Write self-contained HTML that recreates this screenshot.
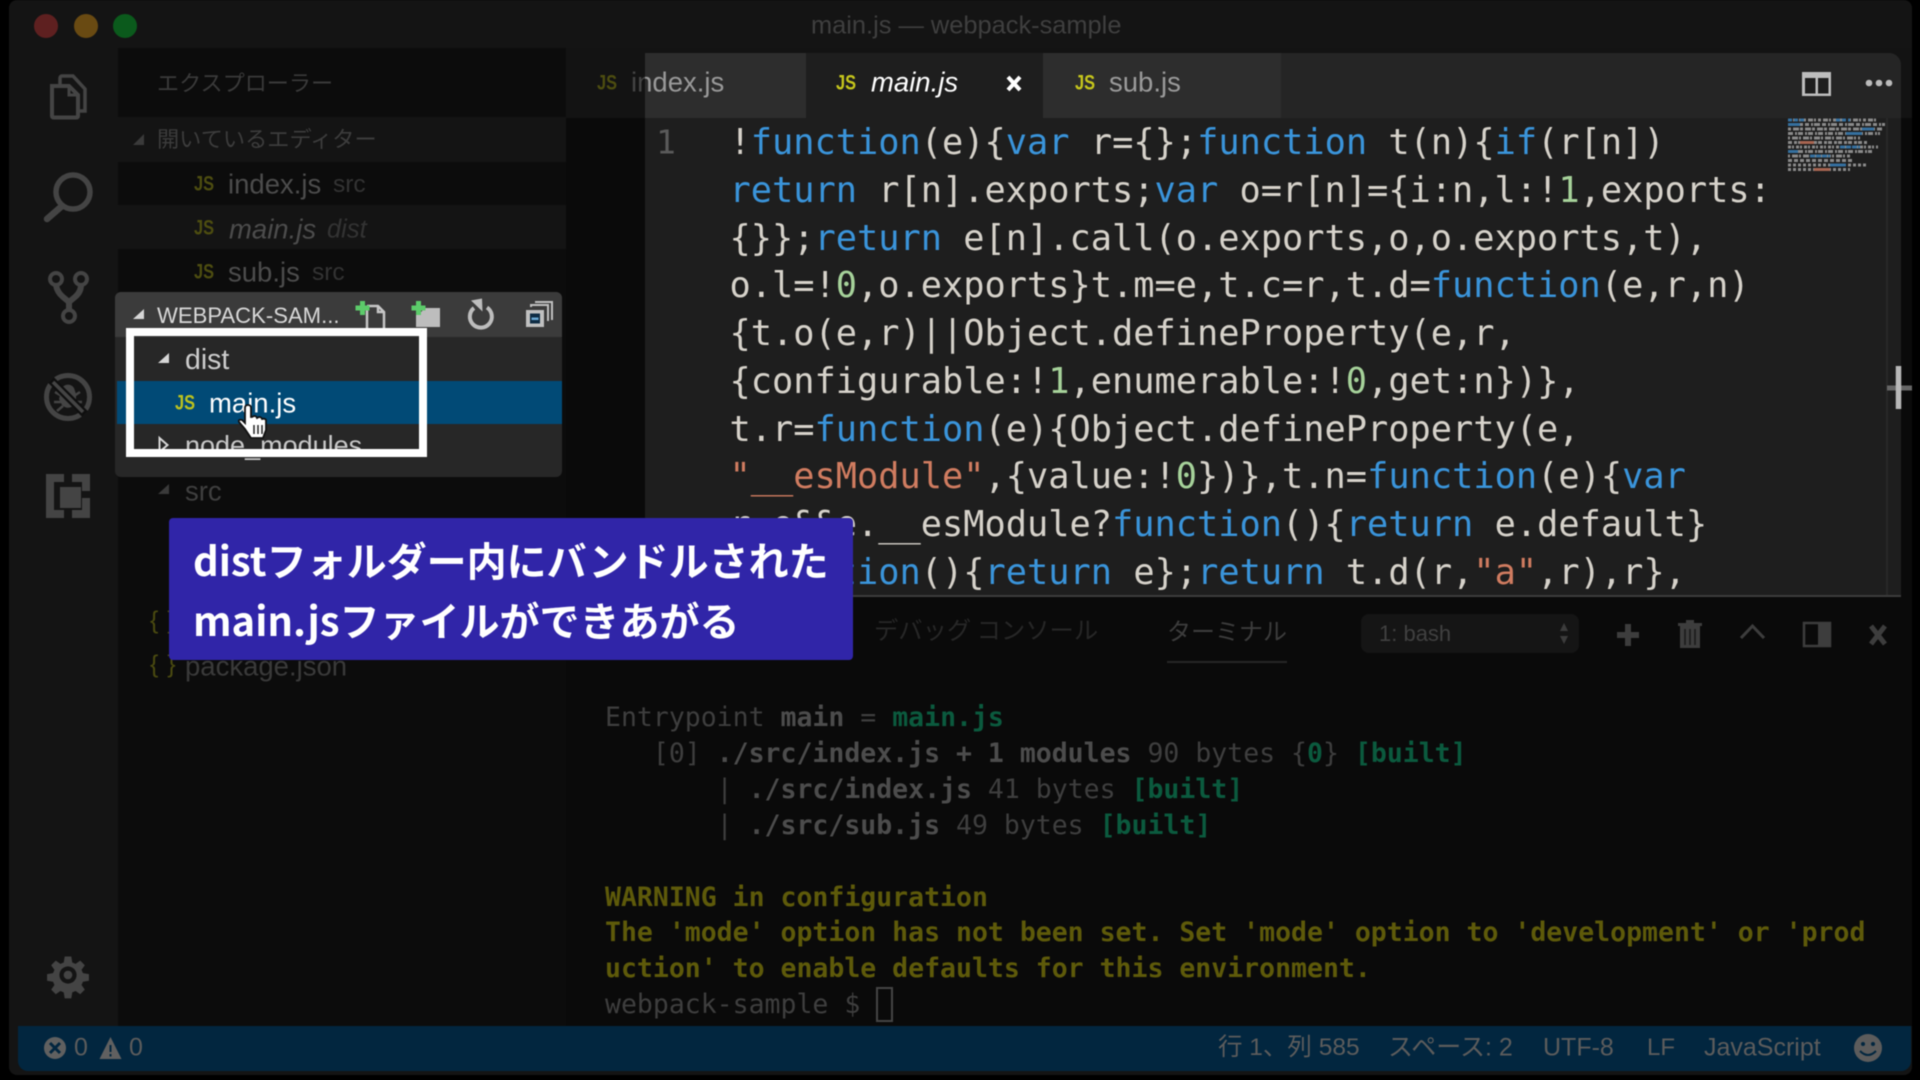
<!DOCTYPE html>
<html lang="ja"><head><meta charset="utf-8"><title>main.js — webpack-sample</title>
<style>
html,body{margin:0;padding:0;background:#000;width:1920px;height:1080px;overflow:hidden}
#r{position:absolute;left:0;top:0;width:1920px;height:1080px;overflow:hidden;font-family:"Liberation Sans","Noto Sans CJK JP",sans-serif;filter:blur(.45px)}
.b{position:absolute}
.t{position:absolute;white-space:pre;line-height:1;transform:translateY(-50%)}
.s{font-size:27.500px}
.cj{font-family:"Noto Sans CJK JP",sans-serif}
.js{position:absolute;white-space:pre;line-height:1;font-weight:700;font-size:21px;transform:translateY(-50%) scaleX(.78);transform-origin:left center}
.m{font-family:"DejaVu Sans Mono","Liberation Mono",monospace}
#code{position:absolute;left:729.500px;top:119px;font-size:35.300px;line-height:47.75px;color:#d6d2ca;white-space:pre;margin:0;font-family:"DejaVu Sans Mono",monospace}
#code i{font-style:normal;color:#3a94da}#code u{text-decoration:none;color:#a6d29a}#code b{font-weight:400;color:#d07c60}
#term{position:absolute;left:605px;top:700px;font-size:26.5px;line-height:35.9px;color:#3e3e3e;white-space:pre;margin:0;font-family:"DejaVu Sans Mono",monospace}
#term b{color:#4c4c4c}#term .g{color:#0b5a3e;font-weight:700}#term .y{color:#5e5a0a;font-weight:700}
svg{position:absolute;left:0;top:0}
</style></head><body><div id="r">
<!-- window -->
<div class="b" style="left:9px;top:0;width:1903px;height:1075px;background:#141414;border-radius:8px"></div>
<div class="b" style="left:118px;top:48px;width:448px;height:978px;background:#0c0c0c"></div>
<div class="b" style="left:566px;top:48px;width:1346px;height:70px;background:#131313"></div>
<div class="b" style="left:566px;top:118px;width:1346px;height:908px;background:#0a0a0a"></div>
<div class="b" style="left:118px;top:117px;width:448px;height:45px;background:#141414"></div>
<div class="b" style="left:118px;top:205px;width:448px;height:44px;background:#141414"></div>
<!-- traffic -->
<div class="b" style="left:34px;top:14px;width:24px;height:24px;border-radius:50%;background:#5e2020"></div>
<div class="b" style="left:74px;top:14px;width:24px;height:24px;border-radius:50%;background:#694a12"></div>
<div class="b" style="left:113px;top:14px;width:24px;height:24px;border-radius:50%;background:#0b5a1c"></div>
<div class="t" style="left:811px;top:26px;font-size:25.400px;color:#3f3f3f">main.js — webpack-sample</div>
<!-- activity icons -->
<svg width="1920" height="1080" fill="none" stroke="#444">
<path d="M52 86h17l9 9v21a1.5 1.5 0 0 1-1.500 1.500h-23a1.500 1.500 0 0 1-1.500-1.500z" stroke-width="4"/>
<path d="M69 86v9h9" stroke-width="3"/>
<path d="M60 84v-6a2 2 0 0 1 2-2h11l12 13v22h-5" stroke-width="3.500"/>
<circle cx="73" cy="192" r="17" stroke-width="5.500"/><path d="M62 206L47 219" stroke-width="6.500" stroke-linecap="round"/>
<circle cx="56" cy="279" r="6" stroke-width="4"/><circle cx="81" cy="279" r="6" stroke-width="4"/><circle cx="69" cy="316" r="6" stroke-width="4"/>
<path d="M56 285q1 7 7 12l6 5 6-5q6-5 6-12M69 302v8" stroke-width="6"/>
<circle cx="68" cy="397" r="21.500" stroke-width="5"/>
<path d="M62 388a7 7 0 0 1 12 0l2 6v6a8 8 0 0 1-14 5l-3-6z" fill="#444" stroke="none"/>
<path d="M55 392l7 4M54 402h7M57 411l6-5M80 392l-6 4M82 402h-7M79 411l-6-5" stroke-width="2.500"/>
<path d="M51 380l34 34" stroke="#0f0f0f" stroke-width="8"/>
<path d="M53 382l30 30" stroke-width="3.500"/>
<path d="M46 474h18v8h-10v28h10v8h-18zM72 474h18v17h-8v-9h-10zM72 510h10v-12h8v20h-18z" fill="#444" stroke="none"/>
<rect x="60" y="487" width="21" height="21" fill="#444" stroke="none"/>
<g transform="translate(68 975) scale(.66)" fill="#444" stroke="none">
<path fill-rule="evenodd" d="M-5-28h10l1.500 9 5 2.200 7-5 7 7-5 7 2.200 5 9 1.500v10l-9 1.500-2.200 5 5 7-7 7-7-5-5 2.200-1.500 9h-10l-1.500-9-5-2.200-7 5-7-7 5-7-2.200-5-9-1.500v-10l9-1.500 2.200-5-5-7 7-7 7 5 5-2.200zM0-13a13 13 0 1 0 .01 0zM0-6.500a6.500 6.500 0 1 1-.01 0z"/>
</g>
</svg>
<!-- sidebar text -->
<div class="t cj" style="left:157px;top:81.500px;font-size:22.100px;color:#3a3a3a">エクスプローラー</div>
<svg width="1920" height="1080"><polygon points="144,134 144,145 133,145" fill="#3a3a3a"/></svg>
<div class="t cj" style="left:157px;top:138px;font-size:22.200px;color:#3c3c3c">開いているエディター</div>
<div class="js" style="left:194px;top:184px;color:#4d4d10">JS</div>
<div class="t s" style="left:228px;top:184px;color:#4c4c4c">index.js</div>
<div class="t" style="left:333px;top:185px;font-size:24.500px;color:#333">src</div>
<div class="js" style="left:194px;top:228px;color:#4d4d10">JS</div>
<div class="t s" style="left:229px;top:228.500px;color:#4c4c4c;font-style:italic">main.js</div>
<div class="t" style="left:327px;top:229.500px;font-size:25.500px;color:#333;font-style:italic">dist</div>
<div class="js" style="left:194px;top:272px;color:#4d4d10">JS</div>
<div class="t s" style="left:228px;top:272px;color:#4c4c4c">sub.js</div>
<div class="t" style="left:312px;top:273px;font-size:24.500px;color:#333">src</div>
<svg width="1920" height="1080"><polygon points="169,484 169,494 158,494" fill="#3a3a3a"/></svg>
<div class="t s" style="left:185px;top:491px;color:#3f3f3f">src</div>
<div class="t" style="left:150px;top:621px;font-size:25px;color:#4a4a10;letter-spacing:1px">{ }</div>
<div class="t" style="left:150px;top:665px;font-size:25px;color:#4a4a10;letter-spacing:1px">{ }</div>
<div class="t s" style="left:185px;top:666px;color:#3a3a3a">package.json</div>
<!-- popup -->
<div class="b" style="left:115px;top:292px;width:447px;height:185px;background:#272727;border-radius:6px;overflow:hidden">
<div class="b" style="left:0;top:0;width:447px;height:45px;background:#3b3b3b"></div>
<div class="b" style="left:2px;top:89px;width:445px;height:43px;background:#014a76"></div>
</div>
<svg width="1920" height="1080"><polygon points="144,309 144,319 133,319" fill="#d6d6d6"/>
<polygon points="169,353 169,363 158,363" fill="#d6d6d6"/>
<polygon points="159.500,438 167.500,445 159.500,452" fill="none" stroke="#d6d6d6" stroke-width="2"/></svg>
<div class="t" style="left:157px;top:316px;font-size:22.100px;color:#d8d8d8">WEBPACK-SAM...</div>
<div class="t" style="left:185px;top:360px;font-size:28.500px;color:#cdcdcd">dist</div>
<div class="js" style="left:175px;top:403px;color:#bcc21e">JS</div>
<div class="t s" style="left:209px;top:402.500px;color:#fff">main.js</div>
<div class="t" style="left:185px;top:446px;font-size:27px;color:#c8c8c8">node_modules</div>
<!-- popup toolbar icons -->
<svg width="1920" height="1080" fill="none">
<path d="M367 306h11l6 6v16M367 306v22M384 312h-6v-6" stroke="#c6c6c6" stroke-width="2.500"/>
<path d="M360 301h5v4.500h4.500v5h-4.500v4.500h-5v-4.500h-4.500v-5h4.500z" fill="#5ccb6a"/>
<path d="M416 313h4l5-5h15v19h-24z" fill="#bdbdbd"/>
<path d="M416 301h5v4.500h4.500v5h-4.500v4.500h-5v-4.500h-4.500v-5h4.500z" fill="#5ccb6a"/>
<path d="M487 307.500a11 11 0 1 1-13 .5" stroke="#bdbdbd" stroke-width="4"/>
<path d="M473 301l11-2 .5 13z" fill="#bdbdbd" transform="translate(-2 -.5)"/>
<rect x="526" y="310" width="18" height="17" fill="#c0c0c0"/><rect x="530" y="313.500" width="10" height="10" fill="#0e2c44"/><rect x="531.500" y="317.500" width="7" height="2.500" fill="#6aa8d4"/>
<path d="M531 307v-2h17v16M536 303v-1h16v18" stroke="#c0c0c0" stroke-width="2"/>
</svg>
<!-- white highlight -->
<div class="b" style="left:126px;top:328px;width:285px;height:113px;border:8px solid #fff"></div>
<!-- hand -->
<svg width="1920" height="1080"><path d="M245 408q0-3 3-3 3 0 3 3v9l1 0q3-2 4.500 0l.5 1q3-2 4.500 0l.5 1q3-1 4 1v10l-3 8h-12l-6-9-6-7q-1-3 3-2l3 3z" fill="#fff" stroke="#111" stroke-width="1.800"/><path d="M254 425v9M258 425v9M262 425v9" stroke="#222" stroke-width="1.500"/></svg>
<!-- dim tab text -->
<div class="js" style="left:597px;top:82.500px;color:#4d4d10">JS</div>
<div class="t s" style="left:631px;top:82px;color:#444">index.js</div>
<!-- editor -->
<div class="b" style="left:0;top:0;width:1920px;height:1080px;clip-path:inset(53px 19px 483px 645px round 0 12px 0 0)">
<div class="b" style="left:645px;top:53px;width:1256px;height:544px;background:#1e1e1e"></div>
<div class="b" style="left:645px;top:53px;width:1256px;height:65px;background:#252525"></div>
<div class="b" style="left:645px;top:53px;width:161px;height:65px;background:#2d2d2d"></div>
<div class="b" style="left:806px;top:53px;width:237px;height:65px;background:#1e1e1e"></div>
<div class="b" style="left:1043px;top:53px;width:238px;height:65px;background:#2d2d2d"></div>
<div class="b" style="left:645px;top:595px;width:1256px;height:2px;background:#3c3c3c"></div>
<div class="t s" style="left:631px;top:82px;color:#999">index.js</div>
<div class="js" style="left:836px;top:82.500px;color:#c6c61c">JS</div>
<div class="t s" style="left:871px;top:82px;color:#fff;font-style:italic">main.js</div>
<div class="js" style="left:1075px;top:82.500px;color:#c6c61c">JS</div>
<div class="t s" style="left:1109px;top:82px;color:#9a9a9a">sub.js</div>
<svg width="1920" height="1080"><path d="M1008 77l12 13M1020 77l-12 13" stroke="#fff" stroke-width="4"/>
<path d="M1802 72h29v24h-29z" fill="#bdbdbd"/><rect x="1805" y="78" width="10.500" height="15.500" fill="#1e1e1e"/><rect x="1818" y="78" width="10.500" height="15.500" fill="#1e1e1e"/>
<circle cx="1869" cy="83" r="3.300" fill="#bbb"/><circle cx="1879" cy="83" r="3.300" fill="#bbb"/><circle cx="1889" cy="83" r="3.300" fill="#bbb"/>
<g fill="none" stroke-width="3">
<path d="M1788 120h88" stroke="#8a8a8a" stroke-dasharray="3 2 5 1 2 2"/><path d="M1788 120h18" stroke="#35709f" stroke-dasharray="4 2"/><path d="M1836 120h14" stroke="#35709f" stroke-dasharray="4 2"/>
<path d="M1788 124.500h97" stroke="#8a8a8a" stroke-dasharray="4 2 2 1 6 2"/><path d="M1788 124.500h12" stroke="#35709f"/>
<path d="M1788 129h94" stroke="#8a8a8a" stroke-dasharray="3 2 6 1"/><path d="M1862 129h12" stroke="#35709f"/>
<path d="M1788 133.500h92" stroke="#8a8a8a" stroke-dasharray="5 2 2 1"/><path d="M1846 133.500h16" stroke="#35709f"/>
<path d="M1788 138h72" stroke="#8a8a8a" stroke-dasharray="2 2 6 1"/>
<path d="M1788 142.500h80" stroke="#8a8a8a" stroke-dasharray="4 2 3 1"/><path d="M1800 142.500h14" stroke="#a86450"/>
<path d="M1788 147h90" stroke="#8a8a8a" stroke-dasharray="3 1 2 2"/><path d="M1840 147h20" stroke="#35709f" stroke-dasharray="5 1"/>
<path d="M1788 151.500h84" stroke="#8a8a8a" stroke-dasharray="5 2 2 1"/><path d="M1788 151.500h10" stroke="#35709f"/>
<path d="M1788 156h62" stroke="#8a8a8a" stroke-dasharray="2 2 6 1"/><path d="M1810 156h20" stroke="#35709f" stroke-dasharray="5 1"/>
<path d="M1788 160.500h66" stroke="#8a8a8a" stroke-dasharray="4 2"/>
<path d="M1788 165h78" stroke="#8a8a8a" stroke-dasharray="3 2"/><path d="M1830 165h16" stroke="#35709f"/>
<path d="M1788 169.500h62" stroke="#8a8a8a" stroke-dasharray="3 2"/><path d="M1814 169.500h16" stroke="#a86450"/>
</g>
<path d="M1887 118v477" stroke="#2c2c2c" stroke-width="1.500"/>
</svg>
<div class="t m" style="left:656px;top:142px;font-size:33px;color:#5a5a5a">1</div>
<pre id="code">!<i>function</i>(e){<i>var</i> r={};<i>function</i> t(n){<i>if</i>(r[n])
<i>return</i> r[n].exports;<i>var</i> o=r[n]={i:n,l:!<u>1</u>,exports:
{}};<i>return</i> e[n].call(o.exports,o,o.exports,t),
o.l=!<u>0</u>,o.exports}t.m=e,t.c=r,t.d=<i>function</i>(e,r,n)
{t.o(e,r)||Object.defineProperty(e,r,
{configurable:!<u>1</u>,enumerable:!<u>0</u>,get:n})},
t.r=<i>function</i>(e){Object.defineProperty(e,
<b>"__esModule"</b>,{value:!<u>0</u>})},t.n=<i>function</i>(e){<i>var</i>
r=e&amp;&amp;e.__esModule?<i>function</i>(){<i>return</i> e.default}
:<i>function</i>(){<i>return</i> e};<i>return</i> t.d(r,<b>"a"</b>,r),r},</pre>
</div>
<!-- resize cursor -->
<svg width="1920" height="1080"><path d="M1887 388h25" stroke="#666" stroke-width="5"/><path d="M1898.500 366v43" stroke="#b8b8b8" stroke-width="5.500"/></svg>
<!-- panel -->
<div class="t cj" style="left:874px;top:629px;font-size:24.300px;color:#272727">デバッグ コンソール</div>
<div class="t cj" style="left:1167px;top:630px;font-size:24px;color:#3c3c3c">ターミナル</div>
<div class="b" style="left:1167px;top:661px;width:120px;height:2px;background:#262626"></div>
<div class="b" style="left:1361px;top:614px;width:218px;height:39px;background:#151515;border-radius:8px"></div>
<div class="t" style="left:1379px;top:634px;font-size:22px;color:#404040">1: bash</div>
<svg width="1920" height="1080">
<path d="M1564 623l4 8h-8zM1564 644l4-8h-8z" fill="#3c3c3c"/>
<path d="M1628 624v22M1617 635h22" stroke="#3d3d3d" stroke-width="6"/>
<path d="M1680 625h20v23h-20z M1686 620h8v3h-8z M1678 623h24v3h-24z" fill="#3d3d3d"/>
<path d="M1685 629v16M1690 629v16M1695 629v16" stroke="#191919" stroke-width="1.500"/>
<path d="M1741 638l11.500-12 11.500 12" fill="none" stroke="#3d3d3d" stroke-width="3"/>
<path d="M1804 623h26v23h-26z" fill="none" stroke="#3d3d3d" stroke-width="2.500"/><rect x="1818" y="623" width="12" height="23" fill="#3d3d3d"/>
<path d="M1871 626l14 18M1885 626l-14 18" stroke="#3d3d3d" stroke-width="5"/>
</svg>
<pre id="term">Entrypoint <b>main</b> = <span class="g">main.js</span>
   [0] <b>./src/index.js + 1 modules</b> 90 bytes {<span class="g">0</span>} <span class="g">[built]</span>
       | <b>./src/index.js</b> 41 bytes <span class="g">[built]</span>
       | <b>./src/sub.js</b> 49 bytes <span class="g">[built]</span>

<span class="y">WARNING in configuration</span>
<span class="y">The 'mode' option has not been set. Set 'mode' option to 'development' or 'prod</span>
<span class="y">uction' to enable defaults for this environment.</span>
webpack-sample $ </pre>
<div class="b" style="left:876px;top:987px;width:13px;height:31px;border:2px solid #444"></div>
<!-- caption -->
<div class="b" style="left:169px;top:518px;width:684px;height:142px;background:#3025a8;border-radius:4px"></div>
<div class="t cj" style="left:193px;top:558.500px;font-size:40px;font-weight:700;color:#fff">distフォルダー内にバンドルされた</div>
<div class="t cj" style="left:193px;top:618.500px;font-size:40px;font-weight:700;color:#fff">main.jsファイルができあがる</div>
<!-- status -->
<div class="b" style="left:18px;top:1026px;width:1893px;height:45px;background:#02263f;border-radius:0 0 10px 10px"></div>
<svg width="1920" height="1080">
<circle cx="55" cy="1048" r="11" fill="#606060"/><path d="M50 1043l10 10M60 1043l-10 10" stroke="#02263f" stroke-width="3"/>
<path d="M110.500 1037l11 22h-22z" fill="#606060"/><path d="M110.500 1045v7M110.500 1054v2.500" stroke="#02263f" stroke-width="2"/>
<circle cx="1868" cy="1048" r="14" fill="#5c5c5c"/><circle cx="1863" cy="1044" r="2" fill="#02263f"/><circle cx="1873" cy="1044" r="2" fill="#02263f"/><path d="M1860 1051q8 8 16 0" fill="none" stroke="#02263f" stroke-width="2"/>
</svg>
<div class="t" style="left:74px;top:1048px;font-size:25px;color:#5c5c5c">0</div>
<div class="t" style="left:129px;top:1048px;font-size:25px;color:#5c5c5c">0</div>
<div class="t" style="left:1218px;top:1048px;font-size:24.500px;color:#5c5c5c">行 1、列 585</div>
<div class="t" style="left:1388px;top:1048px;font-size:25px;color:#5c5c5c">スペース: 2</div>
<div class="t" style="left:1543px;top:1048px;font-size:25px;color:#5c5c5c">UTF-8</div>
<div class="t" style="left:1647px;top:1048px;font-size:24px;color:#5c5c5c">LF</div>
<div class="t" style="left:1704px;top:1048px;font-size:25px;color:#5c5c5c">JavaScript</div>
</div></body></html>
